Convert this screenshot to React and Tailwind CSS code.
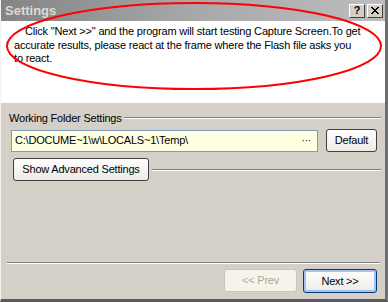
import React from 'react'

const font = { fontFamily: '"Liberation Sans", Arial, sans-serif' }

const App = () => {
  return (
    <div className="relative w-[388px] h-[302px] bg-[#d4d0c8] flex flex-col overflow-hidden border-l border-l-[#f4f3ee] border-r-[3px] border-r-[#6f6f6f] border-b-[3px] border-b-[#5a5a5a]" style={font}>

      {/* Title Bar */}
      <div className="h-[21px] shrink-0 flex items-center justify-between pl-[4px] pr-[2px] bg-gradient-to-r from-[#848484] via-[#a8a8a8] to-[#bdbdbd]">
        <span className="text-[13px] font-bold text-[#dcdad2]">Settings</span>
        <div className="flex items-center gap-[2px]">
          <button className="w-[16px] h-[14px] bg-[#d4d0c8] border border-t-white border-l-white border-r-[#404040] border-b-[#404040] flex items-center justify-center text-[11px] font-bold leading-none text-black">?</button>
          <button className="w-[16px] h-[14px] bg-[#d4d0c8] border border-t-white border-l-white border-r-[#404040] border-b-[#404040] flex items-center justify-center">
            <svg width="8" height="7" viewBox="0 0 8 7"><path d="M0 0L7 7M1 0L8 7M7 0L0 7M8 0L1 7" stroke="#000" strokeWidth="1" /></svg>
          </button>
        </div>
      </div>

      {/* Message */}
      <div className="h-[82px] shrink-0 bg-white pl-[13px] pr-[8px] pt-[4px] text-[11px] leading-[13.5px] text-black tracking-[-0.18px]">
        <p><span className="pl-[11px]">Click "Next &gt;&gt;" and the program will start testing Capture Screen.To get</span><br />accurate results, please react at the frame where the Flash file asks you<br />to react.</p>
      </div>

      {/* Settings area */}
      <div className="flex-1 flex flex-col pl-[6px] pr-[4px] text-[11px] text-black tracking-[-0.2px]">

        <div className="flex items-center gap-[2px] mt-[8px] pl-[2px] h-[14px]">
          <span>Working Folder Settings</span>
          <div className="flex-1 h-[2px] border-t border-t-[#808080] border-b border-b-white" />
        </div>

        <div className="flex items-center gap-[8px] mt-[4px] pl-[4px]">
          <div className="w-[307px] h-[22px] bg-[#ffffe1] border border-[#7f9db9] flex items-center justify-between px-[3px]">
            <span>C:\DOCUME~1\w\LOCALS~1\Temp\</span>
            <span className="text-[10px] leading-none pr-[3px]">···</span>
          </div>
          <button className="w-[51px] h-[23px] rounded-[3px] border border-[#404040] bg-gradient-to-b from-white to-[#ecebe6] text-[11px]">Default</button>
        </div>

        <div className="flex items-center gap-[3px] mt-[6px] pl-[6px]">
          <button className="w-[136px] h-[23px] rounded-[3px] border border-[#404040] bg-gradient-to-b from-white to-[#ecebe6] text-[11px]">Show Advanced Settings</button>
          <div className="flex-1 h-[2px] border-t border-t-[#808080] border-b border-b-white" />
        </div>

        <div className="flex-1" />

        <div className="h-[2px] border-t border-t-[#808080] border-b border-b-white mr-[1px]" />

        <div className="flex justify-end gap-[6px] mt-[5px] mb-[6px] pr-[4px]">
          <button className="w-[73px] h-[23px] rounded-[3px] border border-[#c9c7ba] bg-[#f5f4ea] text-[#aca899] text-[11px]">&lt;&lt; Prev</button>
          <button className="w-[74px] h-[24px] rounded-[3px] border border-[#003c74] bg-gradient-to-b from-white to-[#ecebe6] text-[11px] shadow-[inset_0_0_0_2px_#a9c1f0]">Next &gt;&gt;</button>
        </div>
      </div>

      {/* Annotation ellipse */}
      <svg className="absolute left-0 top-0 pointer-events-none" width="388" height="302">
        <ellipse cx="193" cy="46" rx="187" ry="43" fill="none" stroke="#ff0000" strokeWidth="2" />
      </svg>
    </div>
  )
}

export default App
